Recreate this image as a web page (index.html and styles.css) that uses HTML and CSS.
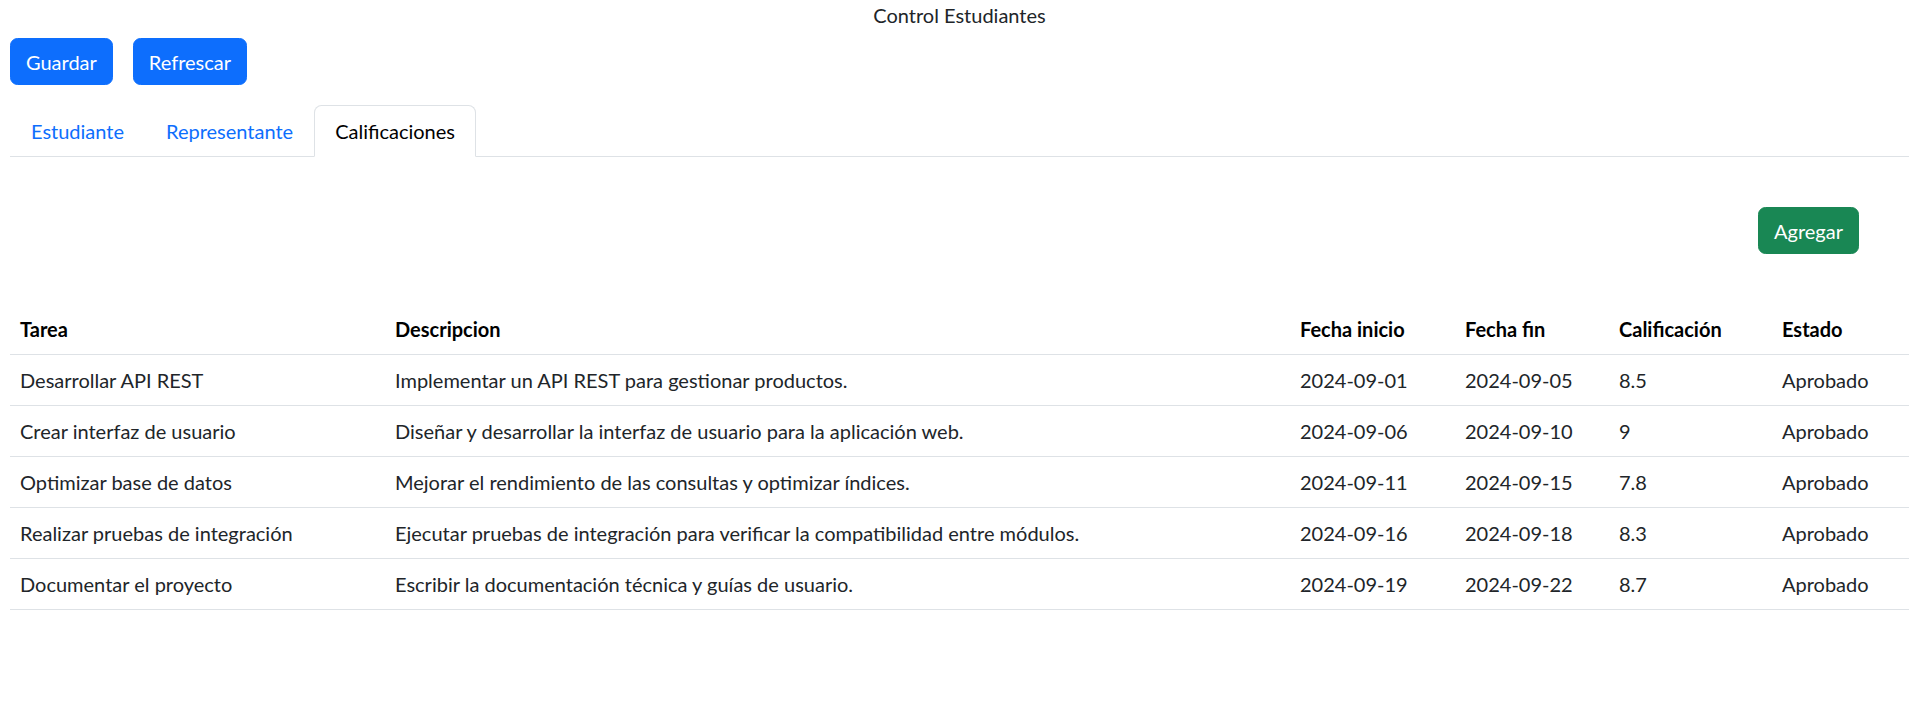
FILE: index.html
```html
<!DOCTYPE html>
<html lang="es">
<head>
<meta charset="utf-8">
<title>Control Estudiantes</title>
<link rel="stylesheet" href="styles.css">
</head>
<body>
<div class="app">
  <div class="title">Control Estudiantes</div>
  <div class="toolbar">
    <button class="btn btn-primary">Guardar</button>
    <button class="btn btn-primary">Refrescar</button>
  </div>
  <ul class="tabs">
    <li class="tab"><a class="tab-link">Estudiante</a></li>
    <li class="tab"><a class="tab-link">Representante</a></li>
    <li class="tab"><a class="tab-link active">Calificaciones</a></li>
  </ul>
  <div class="pane">
    <div class="actions">
      <button class="btn btn-success">Agregar</button>
    </div>
    <table class="grid">
      <thead>
        <tr>
          <th class="c-tarea">Tarea</th>
          <th class="c-desc">Descripcion</th>
          <th class="c-ini">Fecha inicio</th>
          <th class="c-fin">Fecha fin</th>
          <th class="c-cal">Calificación</th>
          <th class="c-est">Estado</th>
        </tr>
      </thead>
      <tbody>
        <tr><td>Desarrollar API REST</td><td>Implementar un API REST para gestionar productos.</td><td>2024-09-01</td><td>2024-09-05</td><td>8.5</td><td>Aprobado</td></tr>
        <tr><td>Crear interfaz de usuario</td><td>Diseñar y desarrollar la interfaz de usuario para la aplicación web.</td><td>2024-09-06</td><td>2024-09-10</td><td>9</td><td>Aprobado</td></tr>
        <tr><td>Optimizar base de datos</td><td>Mejorar el rendimiento de las consultas y optimizar índices.</td><td>2024-09-11</td><td>2024-09-15</td><td>7.8</td><td>Aprobado</td></tr>
        <tr><td>Realizar pruebas de integración</td><td>Ejecutar pruebas de integración para verificar la compatibilidad entre módulos.</td><td>2024-09-16</td><td>2024-09-18</td><td>8.3</td><td>Aprobado</td></tr>
        <tr><td>Documentar el proyecto</td><td>Escribir la documentación técnica y guías de usuario.</td><td>2024-09-19</td><td>2024-09-22</td><td>8.7</td><td>Aprobado</td></tr>
      </tbody>
    </table>
  </div>
</div>
</body>
</html>
```
FILE: styles.css
```css
* { box-sizing: border-box; }
html, body { margin: 0; padding: 0; background: #fff; }
body {
  font-family: "Segoe UI", Lato, "Noto Sans", sans-serif;
  font-size: 20px;
  line-height: 30px;
  color: #212529;
}
.app { padding: 0 10px; }
.title { text-align: center; height: 30px; }
.toolbar { display: flex; gap: 20px; margin-top: 8px; }
.btn {
  font: inherit;
  line-height: 30px;
  padding: 7.5px 15px;
  border: 1px solid transparent;
  border-radius: 7.5px;
  color: #fff;
  cursor: pointer;
}
.btn-primary { background: #0d6efd; border-color: #0d6efd; }
.btn-success { background: #198754; border-color: #198754; }
.tabs {
  list-style: none;
  margin: 20px 0 0;
  padding: 0;
  display: flex;
  border-bottom: 1px solid #dee2e6;
}
.tab { margin-bottom: -1px; }
.tab-link {
  display: block;
  padding: 10px 20px;
  border: 1px solid transparent;
  border-top-left-radius: 7.5px;
  border-top-right-radius: 7.5px;
  color: #0d6efd;
  text-decoration: none;
  cursor: pointer;
}
.tab-link.active {
  color: #000;
  background: #fff;
  border-color: #dee2e6 #dee2e6 #fff;
}
.actions { display: flex; justify-content: flex-end; margin-top: 50px; padding-right: 50px; }
.grid {
  width: 100%;
  margin-top: 50px;
  border-collapse: collapse;
  table-layout: fixed;
}
.grid th, .grid td {
  text-align: left;
  padding: 10px;
  border-bottom: 1px solid #dee2e6;
  white-space: nowrap;
}
.grid th { font-weight: 700; color: #000; }
.grid td { color: #212529; }
.c-tarea { width: 375px; }
.c-desc { width: 905px; }
.c-ini { width: 165px; }
.c-fin { width: 154px; }
.c-cal { width: 163px; }
.c-est { width: 137px; }
```
